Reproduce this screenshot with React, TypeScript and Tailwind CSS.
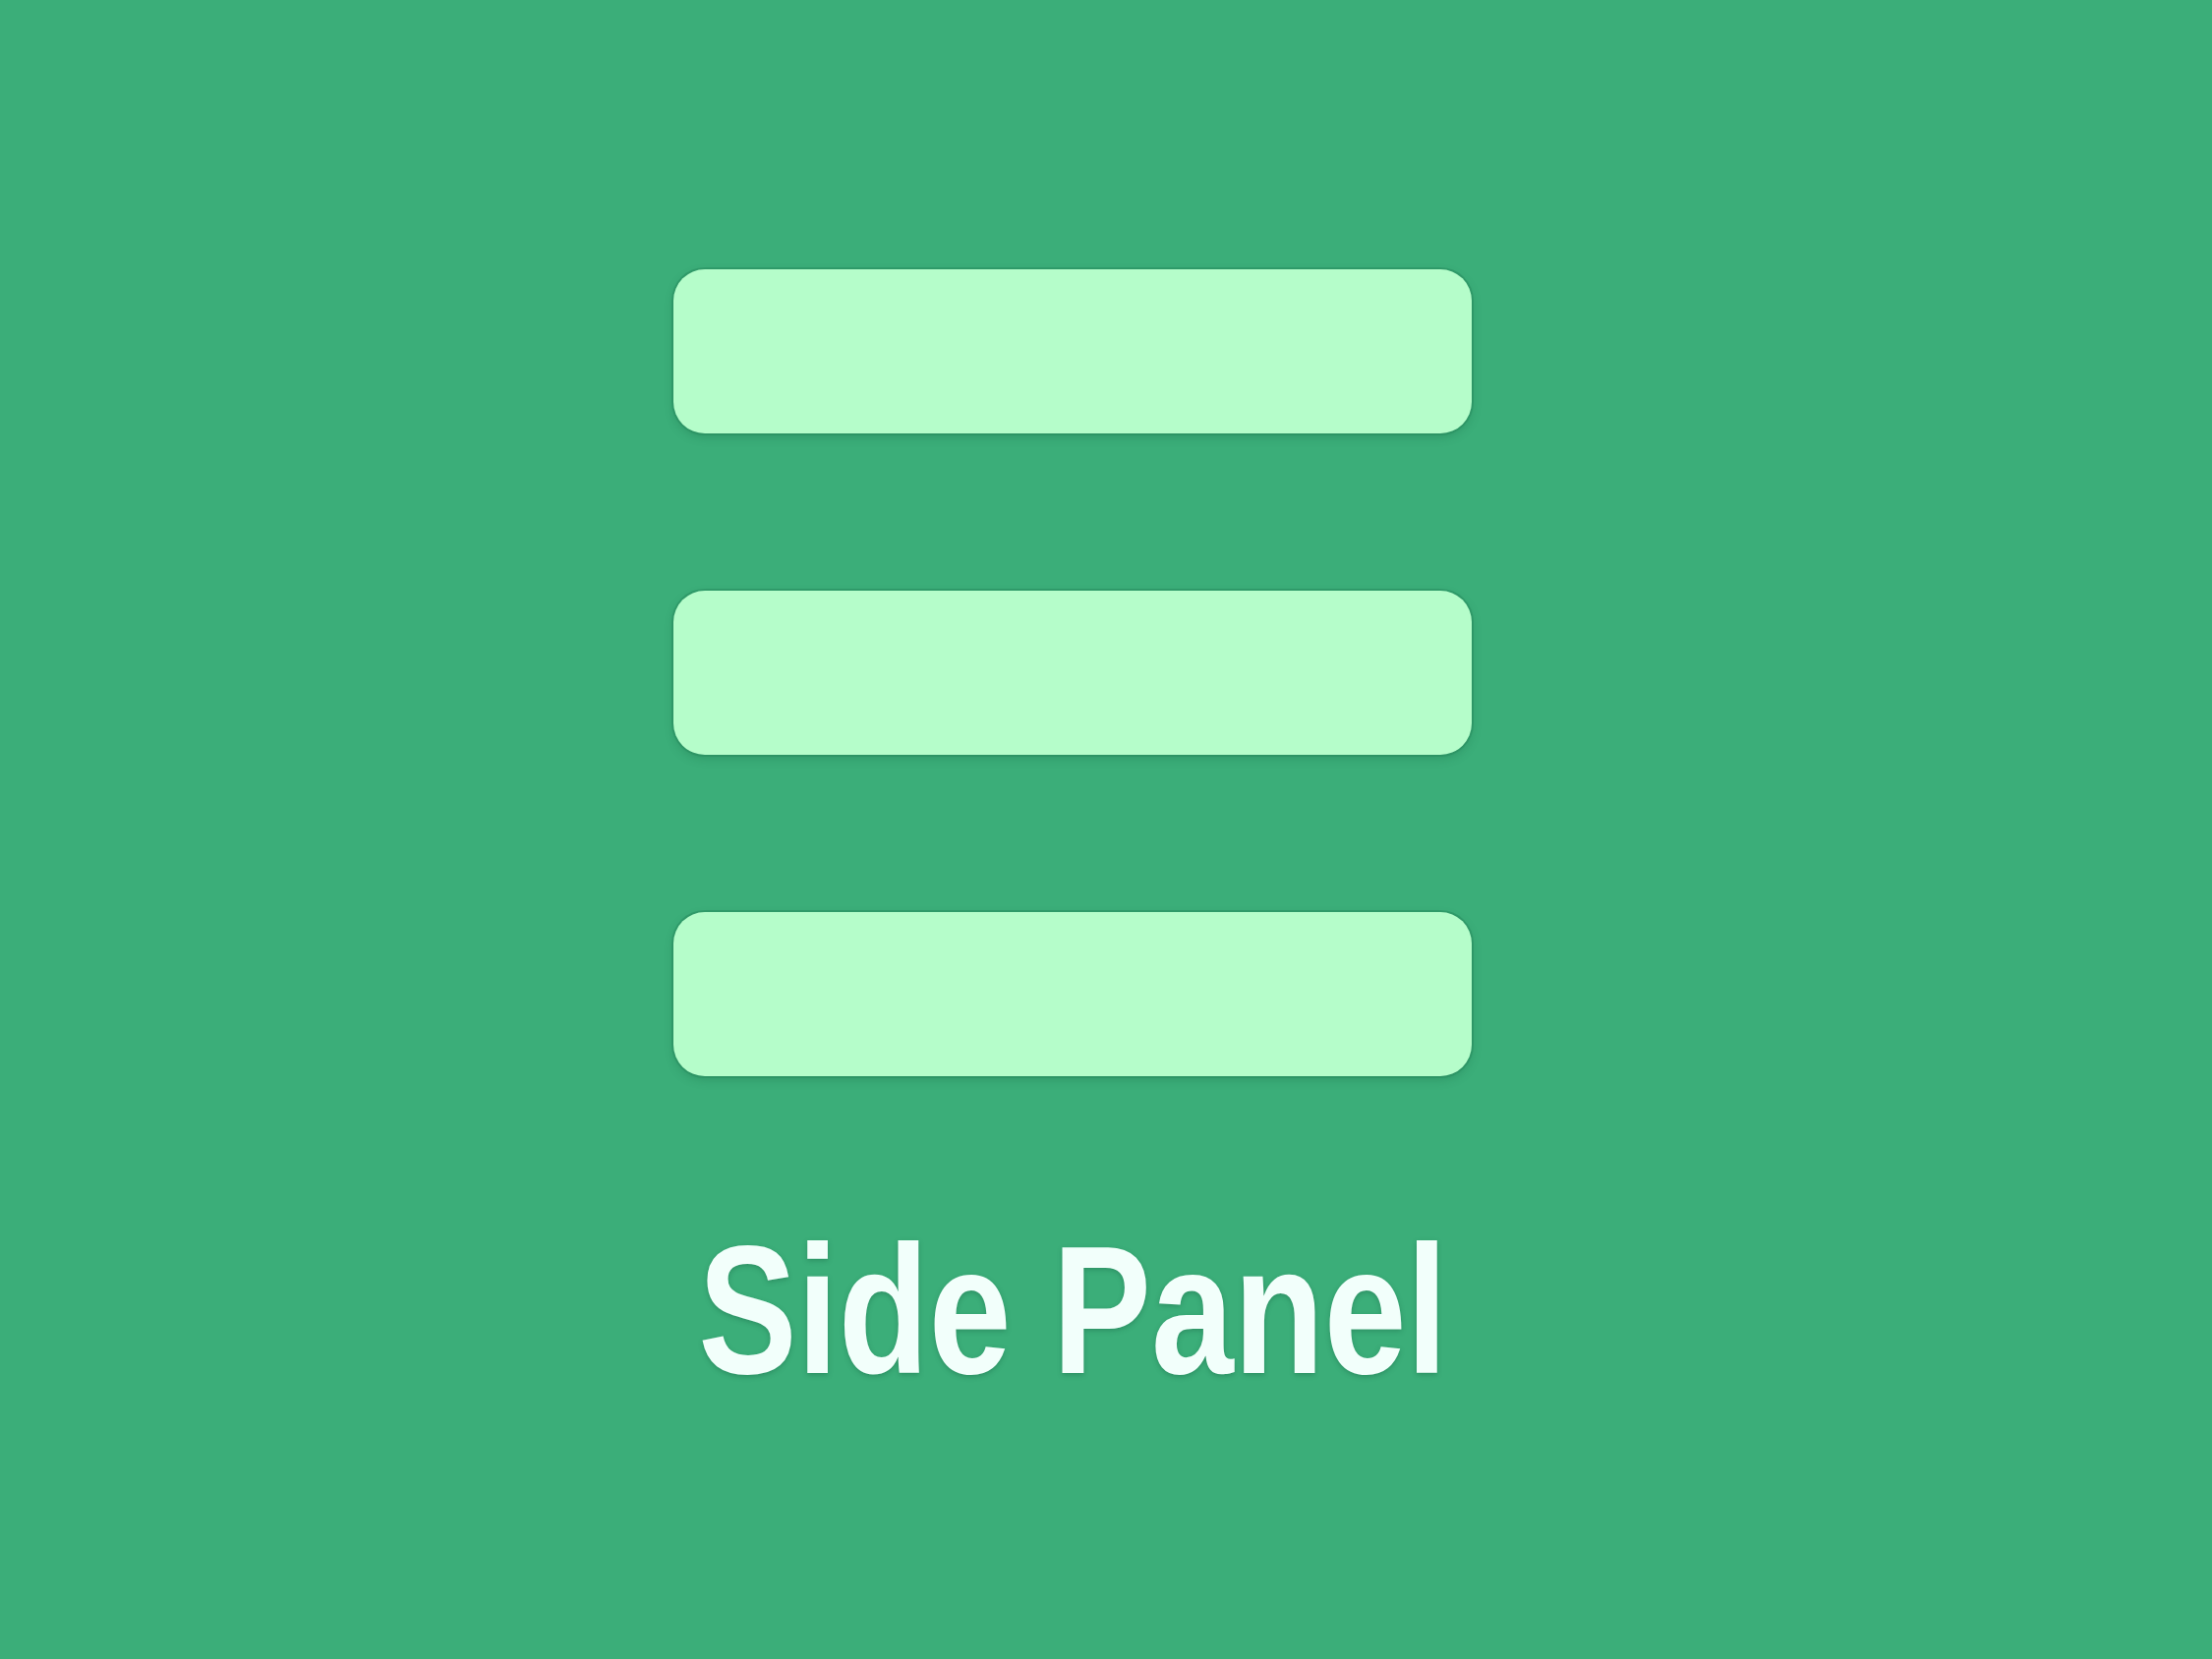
export default function App() {
  return (
    <div className="flex h-screen w-full flex-col items-center bg-[#3bae79] pr-[68px] pt-[274px]">
      {/* Hamburger bars */}
      <div className="flex flex-col gap-[160px]">
        {[0, 1, 2].map((i) => (
          <div
            key={i}
            className="h-[167px] w-[812px] rounded-[32px] bg-[#b5fdca] shadow-[0_0_0_2px_rgba(40,140,95,0.55),0_4px_10px_rgba(20,90,60,0.25)]"
          />
        ))}
      </div>

      {/* Label */}
      <p
        className="mt-[145px] origin-center scale-x-[0.81] text-[186px] font-bold leading-none text-[#f2fffb] [text-shadow:0_2px_6px_rgba(20,90,60,0.35)]"
        style={{ fontFamily: '"Liberation Sans", Arial, sans-serif' }}
      >
        Side Panel
      </p>
    </div>
  )
}
